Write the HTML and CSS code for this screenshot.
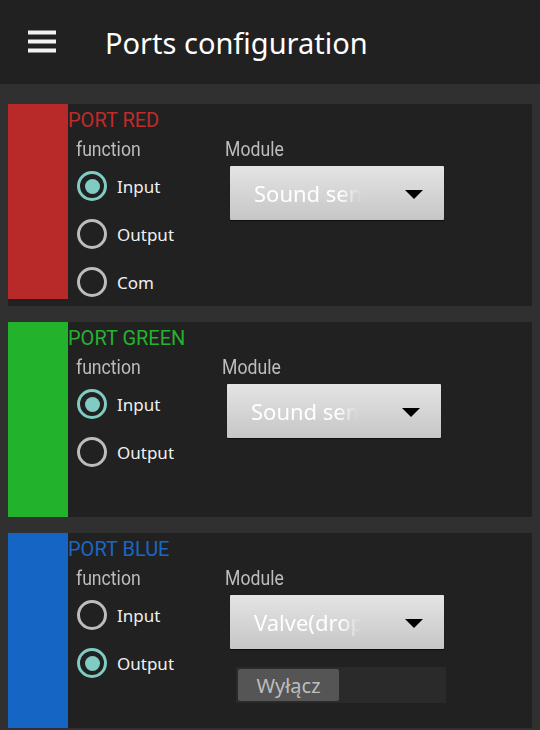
FILE: index.html
```html
<!DOCTYPE html>
<html lang="en">
<head>
    <meta charset="UTF-8">
    <meta name="viewport" content="width=device-width, initial-scale=1.0">
    <title>Ports configuration</title>
    <link rel="stylesheet" href="styles.css">
</head>
<body>
    <header class="toolbar">
        <div class="menu-icon">
            <span></span><span></span><span></span>
        </div>
        <h1>Ports configuration</h1>
    </header>

    <main class="ports">
        <section class="port">
            <div class="bar red"></div>
            <div class="port-body">
                <div class="port-name red-text">PORT RED</div>
                <div class="columns">
                    <div class="col-function">
                        <div class="caption"><span>function</span></div>
                        <div class="radio checked"><i></i>Input</div>
                        <div class="radio"><i></i>Output</div>
                        <div class="radio"><i></i>Com</div>
                    </div>
                    <div class="col-module">
                        <div class="caption"><span>Module</span></div>
                        <div class="spinner"><span class="value">Sound sensor</span><span class="caret"></span></div>
                    </div>
                </div>
            </div>
        </section>

        <section class="port">
            <div class="bar green"></div>
            <div class="port-body">
                <div class="port-name green-text">PORT GREEN</div>
                <div class="columns">
                    <div class="col-function">
                        <div class="caption"><span>function</span></div>
                        <div class="radio checked"><i></i>Input</div>
                        <div class="radio"><i></i>Output</div>
                    </div>
                    <div class="col-module shift">
                        <div class="caption"><span>Module</span></div>
                        <div class="spinner"><span class="value">Sound sensor</span><span class="caret"></span></div>
                    </div>
                </div>
            </div>
        </section>

        <section class="port">
            <div class="bar blue"></div>
            <div class="port-body">
                <div class="port-name blue-text">PORT BLUE</div>
                <div class="columns">
                    <div class="col-function">
                        <div class="caption"><span>function</span></div>
                        <div class="radio"><i></i>Input</div>
                        <div class="radio checked"><i></i>Output</div>
                    </div>
                    <div class="col-module">
                        <div class="caption"><span>Module</span></div>
                        <div class="spinner"><span class="value">Valve(drop)</span><span class="caret"></span></div>
                        <div class="toggle"><button>Wyłącz</button></div>
                    </div>
                </div>
            </div>
        </section>
    </main>
</body>
</html>
```

FILE: styles.css
```css
body {
    margin: 0;
    background-color: #303030;
    font-family: "Noto Sans", "Open Sans", sans-serif;
    color: #eeeeee;
    height: 730px;
    overflow: hidden;
}
.toolbar {
    height: 84px;
    background-color: #212121;
    display: flex;
    align-items: center;
    padding-left: 28px;
}
.menu-icon {
    width: 28px;
    display: flex;
    flex-direction: column;
    gap: 6px;
    margin-top: -1px;
}
.menu-icon span {
    height: 3px;
    background-color: #f2f2f2;
    box-shadow: 0 -1px 0 #8a8a8a, 0 1px 0 #8a8a8a;
}
.toolbar h1 {
    margin: 0 0 0 49px;
    font-size: 29px;
    font-weight: normal;
    color: #ffffff;
}
.ports {
    padding: 20px 8px 0;
    display: flex;
    flex-direction: column;
    gap: 16px;
}
.port {
    display: flex;
    align-items: flex-start;
    background-color: #212121;
}
.bar {
    width: 60px;
    height: 195px;
    flex-shrink: 0;
}
.red { background-color: #b72a29; }
.green { background-color: #23b22c; }
.blue { background-color: #1565c4; }
.red-text { color: #c02b2a; }
.green-text { color: #25b22e; }
.blue-text { color: #1a67c6; }
.port-body {
    flex: 1;
}
.port-name {
    font-family: Roboto, sans-serif;
    font-size: 20px;
    line-height: 28px;
    padding-top: 2px;
}
.columns {
    display: flex;
    padding-left: 8px;
}
.col-function {
    width: 149px;
}
.col-module.shift {
    margin-left: -3px;
}
.caption {
    height: 28px;
    line-height: 30px;
    font-family: Roboto, sans-serif;
    font-size: 21px;
    color: #bdbdbd;
}
.caption span {
    display: inline-block;
    transform: scaleX(0.84);
    transform-origin: left;
}
.radio {
    height: 48px;
    display: flex;
    align-items: center;
    font-size: 17px;
    color: #f0f0f0;
}
.radio i {
    width: 24px;
    height: 24px;
    border: 3px solid #bdbdbd;
    border-radius: 50%;
    margin: 0 10px 0 1px;
    display: flex;
    align-items: center;
    justify-content: center;
}
.radio.checked i {
    border-color: #80cbc4;
}
.radio.checked i::after {
    content: "";
    width: 15px;
    height: 15px;
    border-radius: 50%;
    background-color: #80cbc4;
}
.spinner {
    margin: 4px 0 0 5px;
    width: 214px;
    height: 54px;
    box-sizing: border-box;
    padding: 0 21px 0 24px;
    display: flex;
    align-items: center;
    justify-content: space-between;
    background: linear-gradient(#e4e4e4, #c6c6c6);
    border-radius: 1px;
    box-shadow: 0 1px 1px rgba(0, 0, 0, 0.6);
}
.spinner .value {
    width: 108px;
    overflow: hidden;
    white-space: nowrap;
    font-size: 22px;
    color: #ffffff;
    -webkit-mask-image: linear-gradient(to right, #000 80%, transparent);
    mask-image: linear-gradient(to right, #000 80%, transparent);
}
.caret {
    width: 0;
    height: 0;
    border-left: 9px solid transparent;
    border-right: 9px solid transparent;
    border-top: 9px solid #000000;
    margin-top: 2px;
}
.toggle {
    margin: 18px 0 0 11px;
    width: 210px;
    height: 36px;
    box-sizing: border-box;
    padding: 2px;
    background-color: #2a2a2a;
}
.toggle button {
    width: 101px;
    height: 32px;
    border: none;
    border-radius: 2px;
    background-color: #555555;
    color: #bdbdbd;
    font-family: "Noto Sans", "Open Sans", sans-serif;
    font-size: 20px;
    padding: 0;
}
```
